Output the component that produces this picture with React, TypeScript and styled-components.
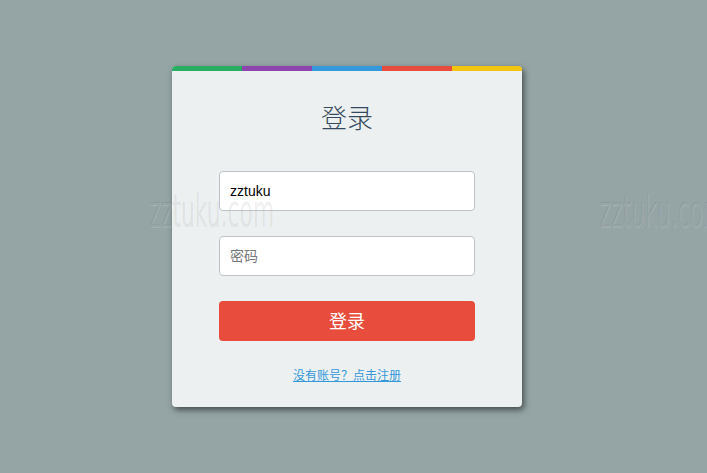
import React from 'react';
import styled, { createGlobalStyle } from 'styled-components';

const GlobalStyle = createGlobalStyle`
  html, body {
    margin: 0;
    padding: 0;
    background: #95a5a6;
    font-family: "Microsoft YaHei", "Noto Sans CJK SC", "Liberation Sans", sans-serif;
  }
`;

const Page = styled.div`
  position: relative;
  width: 707px;
  height: 473px;
  padding: 66px 0 0 172px;
  box-sizing: border-box;
  overflow: hidden;
`;

const Card = styled.div`
  width: 350px;
  background: #ecf0f1;
  border-radius: 4px;
  overflow: hidden;
  box-shadow: 2px 3px 6px rgba(0, 0, 0, 0.55);
`;

const Stripe = styled.div`
  display: flex;
  height: 5px;
`;

const StripePart = styled.div<{ $color: string }>`
  flex: 1;
  background: ${(p) => p.$color};
`;

const Body = styled.div`
  display: flex;
  flex-direction: column;
  padding: 29px 47px 24px;
`;

const Title = styled.h2`
  margin: 0 0 35px;
  height: 36px;
  line-height: 34px;
  text-align: center;
  font-size: 26px;
  font-weight: 300;
  color: #34495e;
`;

const Input = styled.input`
  height: 40px;
  box-sizing: border-box;
  border: 1px solid #bdc3c7;
  border-radius: 4px;
  background: #fff;
  padding: 0 10px;
  margin-bottom: 25px;
  font-size: 14px;
  font-family: "Liberation Sans", "Noto Sans CJK SC", sans-serif;
  color: #000;
  outline: none;

  &::placeholder {
    color: #777;
  }
`;

const Button = styled.button`
  height: 40px;
  border: none;
  border-radius: 4px;
  background: #e74c3c;
  color: #fff;
  font-size: 18px;
  font-family: inherit;
  padding: 0 0 2px;
  margin-bottom: 25px;
`;

const RegisterLink = styled.a`
  align-self: center;
  font-size: 12px;
  line-height: 17px;
  color: #3498db;
  text-decoration: underline;
`;

const Watermark = styled.div<{ $left: number }>`
  position: absolute;
  top: 184px;
  left: ${(p) => p.$left}px;
  font-family: "DejaVu Sans", sans-serif;
  font-size: 42px;
  line-height: 50px;
  transform: scale(0.52, 1.12);
  transform-origin: left top;
  color: rgba(255, 255, 255, 0.12);
  text-shadow: -1px -1px 0 rgba(0, 0, 0, 0.08);
  pointer-events: none;
  white-space: nowrap;
`;

const colors = ['#27ae60', '#8e44ad', '#3498db', '#e74c3c', '#f1c40f'];

export default function App() {
  return (
    <>
      <GlobalStyle />
      <Page>
        <Card>
          <Stripe>
            {colors.map((c) => (
              <StripePart key={c} $color={c} />
            ))}
          </Stripe>
          <Body>
            <Title>登录</Title>
            <Input defaultValue="zztuku" />
            <Input type="password" placeholder="密码" />
            <Button>登录</Button>
            <RegisterLink href="#">没有账号？点击注册</RegisterLink>
          </Body>
        </Card>
        <Watermark $left={150}>zztuku.com</Watermark>
        <Watermark $left={600}>zztuku.com</Watermark>
      </Page>
    </>
  );
}
